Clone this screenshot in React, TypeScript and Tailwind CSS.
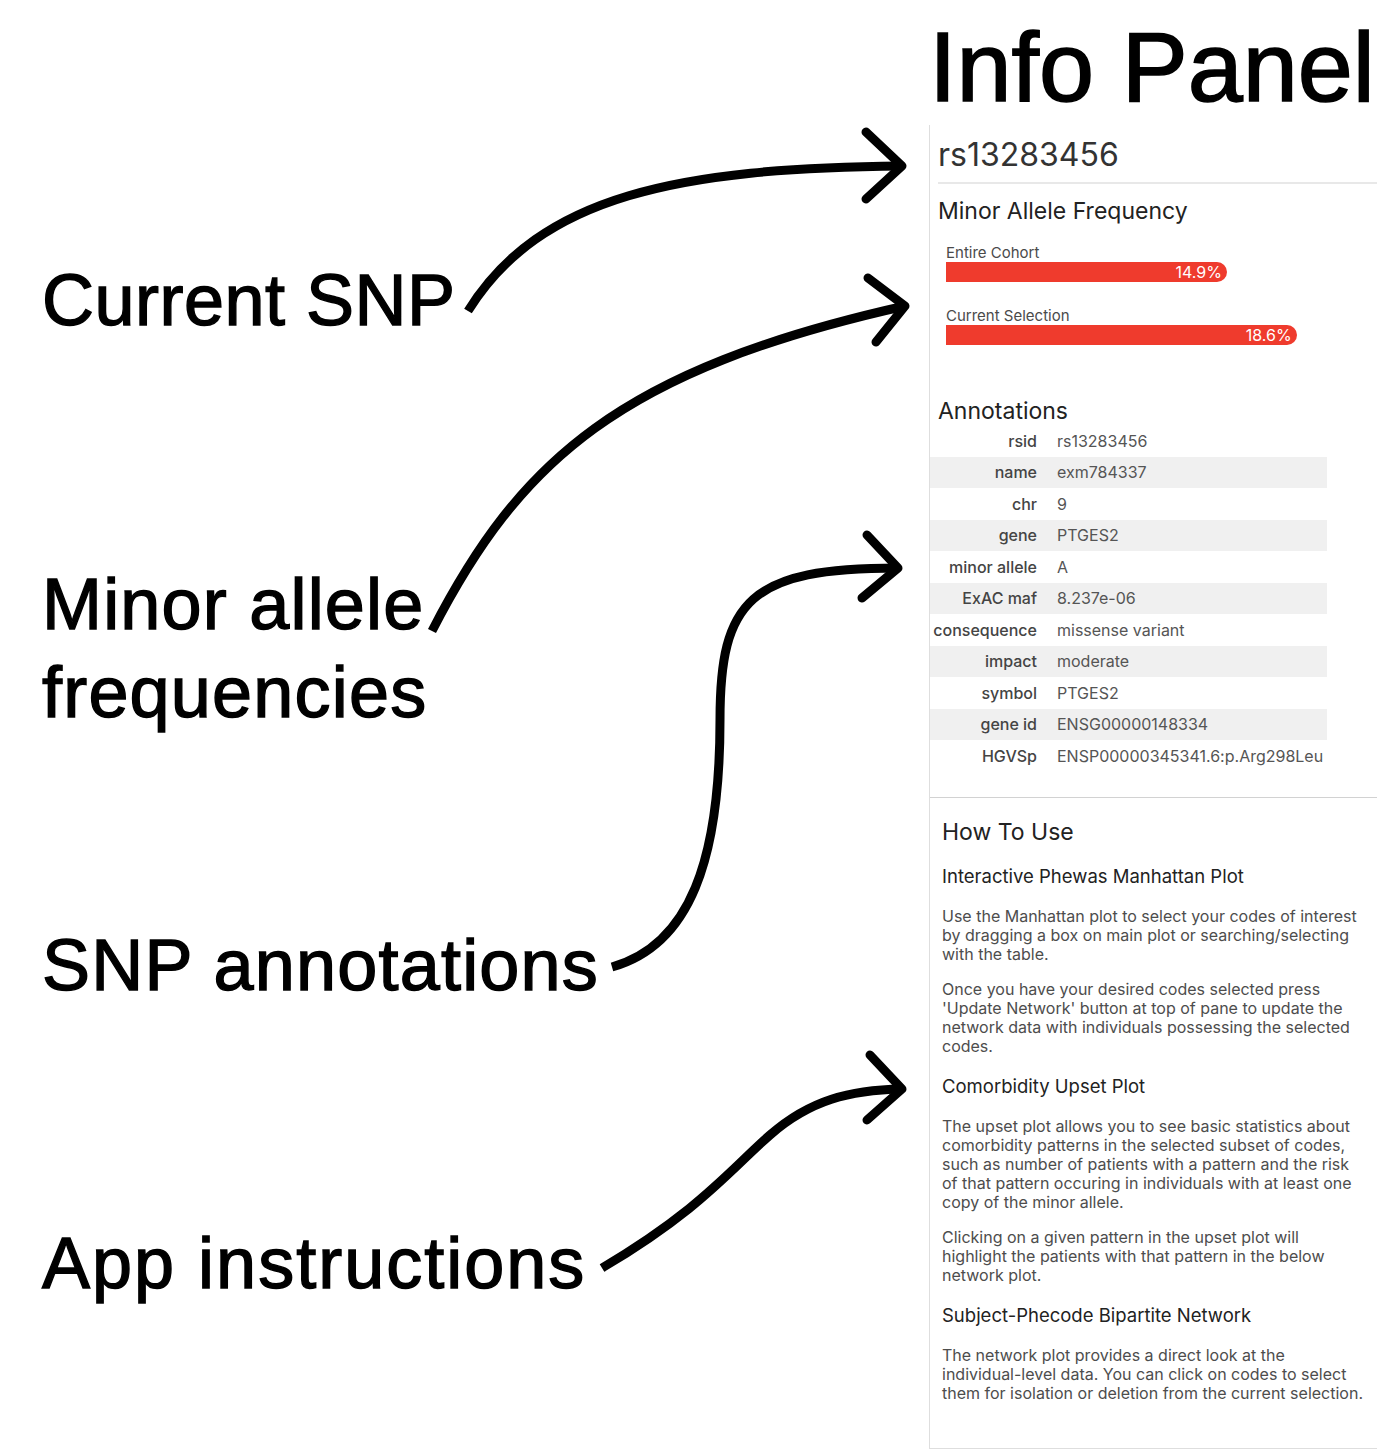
import React from "react";

const bars = [
  { label: "Entire Cohort", value: 14.9 },
  { label: "Current Selection", value: 18.6 },
];

const annotations: [string, string][] = [
  ["rsid", "rs13283456"],
  ["name", "exm784337"],
  ["chr", "9"],
  ["gene", "PTGES2"],
  ["minor allele", "A"],
  ["ExAC maf", "8.237e-06"],
  ["consequence", "missense variant"],
  ["impact", "moderate"],
  ["symbol", "PTGES2"],
  ["gene id", "ENSG00000148334"],
  ["HGVSp", "ENSP00000345341.6:p.Arg298Leu"],
];

const howTo = [
  {
    title: "Interactive Phewas Manhattan Plot",
    paragraphs: [
      "Use the Manhattan plot to select your codes of interest by dragging a box on main plot or searching/selecting with the table.",
      "Once you have your desired codes selected press 'Update Network' button at top of pane to update the network data with individuals possessing the selected codes.",
    ],
  },
  {
    title: "Comorbidity Upset Plot",
    paragraphs: [
      "The upset plot allows you to see basic statistics about comorbidity patterns in the selected subset of codes, such as number of patients with a pattern and the risk of that pattern occuring in individuals with at least one copy of the minor allele.",
      "Clicking on a given pattern in the upset plot will highlight the patients with that pattern in the below network plot.",
    ],
  },
  {
    title: "Subject-Phecode Bipartite Network",
    paragraphs: [
      "The network plot provides a direct look at the individual-level data. You can click on codes to select them for isolation or deletion from the current selection.",
    ],
  },
];

// px of bar per percent point
const BAR_SCALE = 18.85;

function Arrows() {
  return (
    <svg
      className="pointer-events-none absolute left-0 top-0"
      width={1377}
      height={1450}
      viewBox="0 0 1377 1450"
      fill="none"
      stroke="#000"
      strokeWidth={9}
      strokeLinecap="round"
      strokeLinejoin="round"
    >
      <path d="M468 311 C540 195 680 168 902 166" strokeLinecap="butt" />
      <path d="M866 132 L902 166 L866 199" />
      <path d="M432 631 C520 460 620 370 905 306" strokeLinecap="butt" />
      <path d="M868 278 L905 306 L876 342" />
      <path d="M612 967 C690 945 720 860 720 720 C720 600 750 568 898 568" strokeLinecap="butt" />
      <path d="M867 535 L898 568 L862 598" />
      <path d="M602 1268 C700 1210 730 1170 770 1135 C810 1100 850 1090 902 1089" strokeLinecap="butt" />
      <path d="M870 1055 L902 1089 L867 1120" />
    </svg>
  );
}

function Callouts() {
  return (
    <div className="w-[929px] shrink-0 pl-[42px] pt-[256px] font-['Liberation_Sans',Arial,sans-serif] text-[72px] leading-[88px] tracking-[1.2px] text-black [-webkit-text-stroke:1.4px_#000]">
      <p className="tracking-[0.5px]">Current SNP</p>
      <p className="mt-[216px]">
        Minor allele
        <br />
        frequencies
      </p>
      <p className="mt-[185px]">SNP annotations</p>
      <p className="mt-[210px] tracking-[2px]">App instructions</p>
    </div>
  );
}

function SnpSection() {
  return (
    <section className="border-b border-[#d2d2d2] pb-[25.5px] pt-[11px]">
      <h2 className="pl-[8px] text-[32px] leading-[37px] text-[#333]">rs13283456</h2>
      <div className="ml-[8px] mt-[9px] h-[2px] bg-[#e8e8e8]" />

      <h3 className="mt-[13px] pl-[8px] text-[23px] leading-[28px] text-[#222]">
        Minor Allele Frequency
      </h3>
      {bars.map((bar, i) => (
        <div key={bar.label} className={i === 0 ? "mt-[19px] pl-[16px]" : "mt-[25px] pl-[16px]"}>
          <p className="text-[15px] leading-[18px] text-[#4a4a4a]">{bar.label}</p>
          <div
            className="h-[20px] rounded-r-full bg-[#ef3b2d] pr-[5px] text-right text-[16px] leading-[20px] text-white"
            style={{ width: bar.value * BAR_SCALE }}
          >
            {bar.value}%
          </div>
        </div>
      ))}

      <h3 className="mt-[52px] pl-[8px] text-[23px] leading-[28px] text-[#222]">Annotations</h3>
      <table className="w-[397px] table-fixed border-collapse text-[16px]">
        <tbody>
          {annotations.map(([key, value], i) => (
            <tr key={key} className={i % 2 === 1 ? "h-[31.5px] bg-[#f0f0f0]" : "h-[31.5px]"}>
              <td className="w-[118px] whitespace-nowrap pr-[11px] text-right font-medium text-[#444]">
                {key}
              </td>
              <td className="whitespace-nowrap pl-[9px] text-[#555]">{value}</td>
            </tr>
          ))}
        </tbody>
      </table>
    </section>
  );
}

function HowToSection() {
  return (
    <section className="pl-[12px] pt-[20px]">
      <h3 className="text-[23px] leading-[28px] text-[#222]">How To Use</h3>
      {howTo.map((block) => (
        <div key={block.title} className="mt-[19px]">
          <h4 className="text-[18.5px] leading-[22px] text-[#222]">{block.title}</h4>
          {block.paragraphs.map((text, j) => (
            <p
              key={j}
              className={
                j === 0
                  ? "mt-[20px] w-[425px] text-[16px] leading-[19px] text-[#4d4d4d]"
                  : "mt-[16px] w-[425px] text-[16px] leading-[19px] text-[#4d4d4d]"
              }
            >
              {text}
            </p>
          ))}
        </div>
      ))}
    </section>
  );
}

export default function App() {
  return (
    <div className="relative flex h-[1450px] w-[1377px] overflow-hidden bg-white">
      <Callouts />
      <div className="w-[448px] shrink-0 font-['Inter',sans-serif]">
        <div className="h-[125px] pt-[17px]">
          <h1 className="whitespace-nowrap font-['Liberation_Sans',Arial,sans-serif] text-[99px] leading-[99px] text-black [-webkit-text-stroke:1.6px_#000]">
            Info Panel
          </h1>
        </div>
        <div className="h-[1324px] border-b border-l border-[#dedede]">
          <SnpSection />
          <HowToSection />
        </div>
      </div>
      <Arrows />
    </div>
  );
}
